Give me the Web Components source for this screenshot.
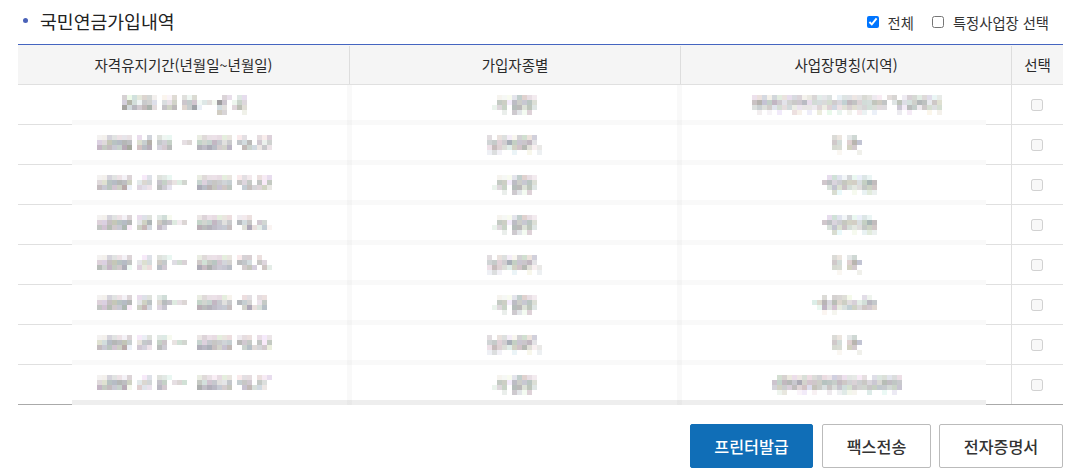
<!DOCTYPE html>
<html lang="ko">
<head>
<meta charset="utf-8">
<title>국민연금가입내역</title>
<style>
  html, body { margin: 0; background: #fff; }
  body { font-family: "Noto Sans CJK KR", "Noto Sans", sans-serif; color: #333; }
</style>
</head>
<body>
<pension-history>
  <section-head slot="head" title="국민연금가입내역"></section-head>
  <history-table slot="table"></history-table>
  <action-button slot="actions" primary>프린터발급</action-button>
  <action-button slot="actions" width="109">팩스전송</action-button>
  <action-button slot="actions" width="124">전자증명서</action-button>
</pension-history>

<script>
class PensionHistory extends HTMLElement {
  connectedCallback() {
    this.attachShadow({ mode: 'open' });
    this.shadowRoot.innerHTML = `
      <style>
        :host { display: block; width: 1066px; height: 476px; box-sizing: border-box; padding: 0 3px 0 18px; }
        .actions { display: flex; justify-content: flex-end; gap: 8px; margin-top: 19px; }
        ::slotted([primary]) { margin-right: 1px; }
      </style>
      <slot name="head"></slot>
      <slot name="table"></slot>
      <div class="actions"><slot name="actions"></slot></div>
    `;
  }
}

class SectionHead extends HTMLElement {
  connectedCallback() {
    this.attachShadow({ mode: 'open' });
    this.shadowRoot.innerHTML = `
      <style>
        :host { display: flex; align-items: center; height: 44px; }
        .bullet { width: 5px; height: 5px; border-radius: 50%; background: #4a62b8; margin: 0 12px 3px 5px; }
        h2 { margin: 0 0 1px; font-size: 18.3px; font-weight: 400; color: #222; line-height: 41px; flex: 1; }
        label { display: flex; align-items: center; font-size: 14.3px; color: #333; margin-left: 18px; }
        input { margin: 0 9px 0 0; width: 12px; height: 12px; }
        .opts { display: flex; padding-right: 14px; margin-top: 0; }
      </style>
      <span class="bullet"></span>
      <h2>${this.getAttribute('title')}</h2>
      <div class="opts">
        <label><input type="checkbox" checked>전체</label>
        <label><input type="checkbox">특정사업장 선택</label>
      </div>
    `;
  }
}

// blocked-out cell content: one digit per 5px block, 0 = white, 9 = darkest
class MosaicText extends HTMLElement {
  connectedCallback() {
    const rows = this.getAttribute('rows').split(' ');
    let seed = Number(this.getAttribute('x')) * 7 + rows[0].length * 13 + 5;
    const rand = () => { seed = (seed * 9301 + 49297) % 233280; return seed / 233280; };
    let rects = '';
    rows.forEach((row, y) => {
      [...row].forEach((c, x) => {
        const s = Number(c);
        if (!s) return;
        const base = 255 - s * 13;
        const tint = () => Math.min(255, Math.round(base + (rand() - 0.5) * 18));
        rects += `<rect x="${x * 5}" y="${y * 5}" width="5" height="5" fill="rgb(${tint()},${tint()},${tint()})"/>`;
      });
    });
    const w = rows[0].length * 5;
    this.attachShadow({ mode: 'open' });
    this.shadowRoot.innerHTML = `
      <style>
        :host { display: block; position: relative; z-index: 1; width: ${w}px; height: 20px; margin: 10px 0 0 ${this.getAttribute('x')}px; }
        svg { display: block; }
      </style>
      <svg width="${w}" height="20" shape-rendering="crispEdges">${rects}</svg>
    `;
  }
}

const DATE_1 = '3132331011302130000032022 3631442032404441221740143 7354562044503471000330353 0000000000000000000430001';
const DATE_A = '11322220203021100000232222201200213 33555550346043400230434543404350414 54544670456034500000656544500543242';
const DATE_B = '11322130012022100000232222201210212 33555540233044322300434543404340514 54544610322054200000656544500453342';
const DATE_C = '11322130222023100000232222201120000 33555550246045421300434543405340430 54544610453053000000656544500362241';
const DATE_D = '11322130012022100000232222201330200 33555540233044023300434543405430430 54544610322054000000656544500453042';
const DATE_E = '11322130222023000000232222100220220 33555550245035422300434543405430240 54544610453034000000656544500462350';
const DATE_F = '11322130112022100000232222201220212 33555540244044023300434543405440514 54544610432054000000656544500453342';
const DATE_H = '11322130012022100000232122201220212 33555540233044023300434432404440430 54544610322054000000656544500453320';
const KIND_A = '011124321 044154453 134055352 001042130';
const KIND_B = '20221133230 34346444520 25332446312 13100100101';
const NAME_1 = '22313222331232230122223211023013323212 46445423445233334345533354502523465243 34342323222213233233333333300415414333 01010100210102010101011010000101000101';
const NAME_2 = '320230 430364 330440 010001';
const NAME_3 = '002321311210 045345443465 003434322444 000310010121';
const NAME_4 = '0030333100210 2353534332354 0152423443443 0010100000000';
const NAME_5 = '03322232332233222120223232 44554644445545433443435554 34435342543434334434444344 01200110100101211002001010';

const ROWS = [
  [DATE_1, 104, KIND_A, 142, NAME_1, 71],
  [DATE_A, 79, KIND_B, 137, NAME_2, 151],
  [DATE_B, 79, KIND_A, 142, NAME_3, 136],
  [DATE_C, 79, KIND_A, 142, NAME_3, 136],
  [DATE_D, 79, KIND_B, 137, NAME_2, 151],
  [DATE_E, 79, KIND_A, 142, NAME_4, 131],
  [DATE_F, 79, KIND_B, 137, NAME_2, 151],
  [DATE_H, 79, KIND_A, 142, NAME_5, 91],
];

class HistoryTable extends HTMLElement {
  connectedCallback() {
    this.attachShadow({ mode: 'open' });
    const heads = ['자격유지기간(년월일~년월일)', '가입자종별', '사업장명칭(지역)', '선택'];
    const body = ROWS.map(([a, ax, b, bx, c, cx], i) => `
      <div class="row ${i === ROWS.length - 1 ? 'last' : ''}">
        <div class="cell"><mosaic-text rows="${a}" x="${ax}"></mosaic-text></div>
        <div class="cell"><mosaic-text rows="${b}" x="${bx}"></mosaic-text></div>
        <div class="cell"><mosaic-text rows="${c}" x="${cx}"></mosaic-text></div>
        <div class="cell pick"><input type="checkbox" disabled></div>
      </div>`).join('');
    this.shadowRoot.innerHTML = `
      <style>
        :host { display: block; position: relative; border-top: 1px solid #4565c0; font-size: 14.5px; color: #2a2a2a; }
        .row { display: grid; grid-template-columns: 332px 331px 331px 51px; height: 40px; box-sizing: border-box; border-bottom: 1px solid #e0e0e0; }
        .row.last { border-bottom-color: #aaa; }
        .head { background: #f5f5f5; }
        .head span { display: flex; align-items: center; justify-content: center; border-right: 1px solid #ddd; margin-top: 1px; padding-bottom: 1px; }
        .head span:last-child { border-right: 0; }
        .cell { border-right: 1px solid #e0e0e0; }
        .cell.pick { border-right: 0; display: flex; align-items: center; justify-content: center; padding-right: 1px; }
        .pick input { margin: 0; width: 12px; height: 12px; }
        /* wash over the blocked-out part of the table, sits under the blocks */
        .wash {
          position: absolute; left: 54px; top: 40px; width: 914px; height: 320px;
          background-color: #fff;
          background-image:
            linear-gradient(rgba(0,0,0,.024), rgba(0,0,0,.024)),
            linear-gradient(rgba(0,0,0,.024), rgba(0,0,0,.024)),
            repeating-linear-gradient(to bottom, transparent 0 35px, #f9f9f9 35px 40px),
            linear-gradient(#eee, #eee);
          background-size: 5px 100%, 5px 100%, 100% 280px, 100% 5px;
          background-position: 275px 0, 605px 0, 0 0, 0 100%;
          background-repeat: no-repeat;
        }
      </style>
      <div class="row head">${heads.map(h => `<span>${h}</span>`).join('')}</div>
      <div class="wash"></div>
      ${body}
    `;
  }
}

class ActionButton extends HTMLElement {
  connectedCallback() {
    const primary = this.hasAttribute('primary');
    this.attachShadow({ mode: 'open' });
    this.shadowRoot.innerHTML = `
      <style>
        :host {
          display: flex; align-items: center; justify-content: center; box-sizing: border-box;
          width: ${this.getAttribute('width') || 123}px; height: 44px; border-radius: 2px; font-size: 16.2px; font-weight: 500;
          background: ${primary ? '#106eb7' : '#fff'}; color: ${primary ? '#fff' : '#333'};
          border: 1px solid ${primary ? '#106eb7' : '#bbb'};
        }
      </style>
      <slot></slot>
    `;
  }
}

customElements.define('pension-history', PensionHistory);
customElements.define('section-head', SectionHead);
customElements.define('mosaic-text', MosaicText);
customElements.define('history-table', HistoryTable);
customElements.define('action-button', ActionButton);
</script>
</body>
</html>
